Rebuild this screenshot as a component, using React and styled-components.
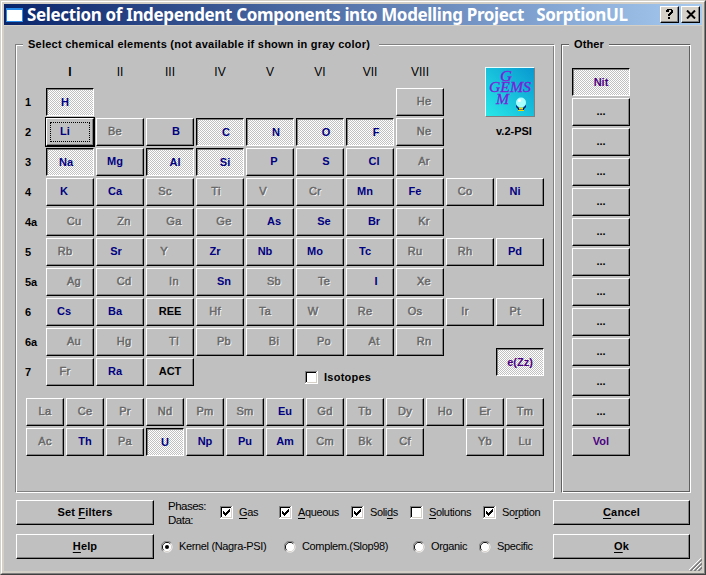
import React from "react";
import styled, { createGlobalStyle, css } from "styled-components";

const GlobalStyle = createGlobalStyle`
  * { box-sizing: border-box; }
  body { margin: 0; overflow: hidden; font: 11px/13px "Liberation Sans", Arial, sans-serif; color: #000; }
  button { font: inherit; color: inherit; padding: 0; margin: 0; border: 0; border-radius: 0; }
  u { text-decoration: underline; text-underline-offset: 2px; text-decoration-thickness: 1px; text-decoration-skip-ink: none; }
`;

const raised = css`
  border: 1px solid;
  border-color: #fff #000 #000 #fff;
  box-shadow: inset -1px -1px #808080;
`;

const sunken = css`
  border: 1px solid;
  border-color: #000 #fff #fff #000;
  box-shadow: inset 1px 1px #808080;
  background: conic-gradient(#fff 25%, #c0c0c0 0 50%, #fff 0 75%, #c0c0c0 0) 0 0 / 2px 2px;
`;

const Window = styled.div`
  width: 706px;
  height: 575px;
  border: 1px solid;
  border-color: #d4d0c8 #404040 #404040 #d4d0c8;
  background: #d4d0c8;
`;

const Frame = styled.div`
  height: 573px;
  border: 1px solid;
  border-color: #fff #808080 #808080 #fff;
  padding: 2px;
  display: flex;
  flex-direction: column;
`;

const TitleBar = styled.header`
  height: 21px;
  margin-bottom: 1px;
  padding: 0 2px;
  display: flex;
  align-items: center;
  background: linear-gradient(90deg, #0a246a, #a6caf0);
`;

const AppIcon = styled.span`
  width: 17px;
  height: 14px;
  background: #fff;
  border: 1px solid #2a8ae8;
  border-top-width: 2px;
`;

const Title = styled.h1`
  margin: 0 0 0 4px;
  flex: 1;
  white-space: pre;
  color: #fff;
  font: bold 17px/21px "Noto Sans", sans-serif;
  letter-spacing: ${(p) => p.$spacing}px;
`;

const CaptionButton = styled.button`
  width: 19px;
  height: 17px;
  margin-left: ${(p) => p.$gap || 0}px;
  display: grid;
  place-items: center;
  background: #d4d0c8;
  ${raised}
`;

const Body = styled.main`
  flex: 1;
  background: #c0c0c0;
  padding: 18px 11px 0;
`;

const Panels = styled.div`
  display: flex;
  gap: 6px;
`;

const Group = styled.section`
  position: relative;
  width: ${(p) => p.$width}px;
  height: 449px;
  border: 1px solid;
  border-color: ${(p) => p.$line} #fff #fff ${(p) => p.$line};
  box-shadow: inset 1px 1px #fff, inset -1px -1px ${(p) => p.$line};
  padding: ${(p) => p.$pad};
`;

const Legend = styled.h2`
  position: absolute;
  left: 7px;
  top: -8px;
  width: ${(p) => p.$width}px;
  margin: 0;
  padding-left: 5px;
  background: #c0c0c0;
  font: bold 11px/14px "Liberation Sans", Arial, sans-serif;
  letter-spacing: ${(p) => p.$spacing}px;
  white-space: nowrap;
`;

const inks = { on: "#000080", off: "#686868", black: "#000", violet: "#4b0082" };

const Key = styled.button`
  width: ${(p) => p.$width}px;
  height: 28px;
  display: flex;
  align-items: center;
  justify-content: center;
  background: #c0c0c0;
  font-weight: bold;
  color: ${(p) => inks[p.$ink]};
  ${(p) => (p.$pressed ? sunken : raised)}
  ${(p) => p.$ink === "off" && css`
    font-weight: normal;
    letter-spacing: 0.3px;
    -webkit-text-stroke: 0.5px #686868;
    text-shadow: 1px 1px #fff;
  `}
  ${(p) => p.$focused && css`
    box-shadow: inset -1px -1px #808080, 0 0 0 1px #000;
  `}
`;

const KeyText = styled.span`
  flex: 1;
  text-align: center;
  padding-left: ${(p) => Math.max(0, p.$shift) * 2}px;
  padding-right: ${(p) => Math.max(0, -p.$shift) * 2}px;
  margin-top: ${(p) => (p.$pressed ? 1 : -1)}px;
  white-space: nowrap;
`;

const FocusRing = styled.span`
  flex: 1;
  margin: 0 3px;
  height: 20px;
  display: flex;
  align-items: center;
  border: 1px dotted #000;
`;

const TableHead = styled.div`
  display: grid;
  grid-template-columns: repeat(8, 50px);
  margin-left: 20px;
  height: 22px;
  text-align: center;
  font-size: 12px;
`;

const Numeral = styled.span`
  width: 48px;
  font-weight: ${(p) => (p.$bold ? "bold" : "normal")};
`;

const Period = styled.div`
  height: 30px;
  display: grid;
  grid-template-columns: 18px repeat(10, 48px);
  column-gap: 2px;
`;

const PeriodLabel = styled.span`
  font-weight: bold;
  line-height: 28px;
  margin-left: -1px;
`;

const BottomRows = styled.div`
  display: grid;
  grid-template-columns: repeat(13, 38px);
  gap: 2px;
  margin-top: 10px;
`;

const Slot = styled.span``;

const Logo = styled.div`
  position: absolute;
  left: 469px;
  top: 22px;
  width: 58px;
  text-align: center;
  font-weight: bold;
`;

const Emblem = styled.div`
  width: 50px;
  height: 50px;
  margin-bottom: 8px;
  border: 1px solid;
  border-color: #e8ffff #808080 #808080 #e8ffff;
`;

const FloatKey = styled.div`
  grid-column: 11;
  margin-top: -10px;
`;

const IsotopeSlot = styled.div`
  grid-column: 7 / 10;
  margin: 13px 0 0 9px;
  font-weight: bold;
  letter-spacing: 0.25px;
`;

const OtherList = styled.div`
  display: flex;
  flex-direction: column;
  gap: 2px;
`;

const Footer = styled.footer`
  margin: 7px 1px 0;
  display: grid;
  grid-template-columns: 138px 399px 137px;
  grid-template-rows: 25px 25px;
  row-gap: 9px;
`;

const Command = styled.button`
  background: #c0c0c0;
  font-weight: bold;
  letter-spacing: 0.15px;
  padding-bottom: 1px;
  ${raised}
`;

const Options = styled.div`
  display: flex;
  align-items: center;
  padding-left: ${(p) => p.$inset}px;
  letter-spacing: -0.35px;
`;

const Captions = styled.div`
  width: 52px;
  line-height: 14px;
  font-size: 11.5px;
  letter-spacing: -0.5px;
`;

const Option = styled.label`
  width: ${(p) => p.$width}px;
  display: flex;
  align-items: center;
  gap: 6px;
  white-space: nowrap;
`;

const Grip = styled.svg`
  position: absolute;
  left: 689px;
  top: 558px;
`;

const Mark = ({ checked }) => (
  <svg width="13" height="13" shapeRendering="crispEdges">
    <path d="M0 0h13v13h-13z" fill="#fff" />
    <path d="M0 0h12v1h-11v11h-1z" fill="#808080" />
    <path d="M1 1h10v1h-9v9h-1z" fill="#000" />
    <path d="M2 11h9v-9h1v10h-10z" fill="#d4d0c8" />
    {checked && <path d="M3 5h1v1h1v1h1v-1h1v-1h1v-1h1v-1h1v3h-1v1h-1v1h-1v1h-1v1h-1v-1h-1v-1h-1z" fill="#000" />}
  </svg>
);

const Radio = ({ checked }) => (
  <svg width="12" height="12">
    <circle cx="6" cy="6" r="5.5" fill="#fff" />
    <path d="M1.8 10.2A5.5 5.5 0 0 1 10.2 1.8" fill="none" stroke="#808080" />
    <path d="M2.7 9.3A4.6 4.6 0 0 1 9.3 2.7" fill="none" stroke="#000" />
    <path d="M9.3 2.7A4.6 4.6 0 0 1 2.7 9.3" fill="none" stroke="#d4d0c8" />
    {checked && <circle cx="6" cy="6" r="2" fill="#000" />}
  </svg>
);

const Element = ({ spec, width = 48 }) => {
  const [name, ink = "off", shift = 0, state] = spec;
  const pressed = state === "pressed";
  const label = <KeyText $shift={shift} $pressed={pressed}>{name}</KeyText>;
  return (
    <Key $width={width} $ink={ink} $pressed={pressed} $focused={state === "focused"}>
      {state === "focused" ? <FocusRing>{label}</FocusRing> : label}
    </Key>
  );
};

const P = "pressed";
const periods = [
  ["1", [["H", "on", -5, P], null, null, null, null, null, null, ["He", "off", 4]]],
  ["2", [["Li", "on", -5, "focused"], ["Be", "off", -5], ["B", "on", 6], ["C", "on", 6, P], ["N", "on", 6, P], ["O", "on", 6, P], ["F", "on", 6, P], ["Ne", "off", 4]]],
  ["3", [["Na", "on", -4, P], ["Mg", "on", -5], ["Al", "on", 5, P], ["Si", "on", 5, P], ["P", "on", 4], ["S", "on", 6], ["Cl", "on", 4], ["Ar", "off", 4]]],
  ["4", [["K", "on", -6], ["Ca", "on", -5], ["Sc", "off", -5], ["Ti", "off", -4], ["V", "off", -7], ["Cr", "off", -5], ["Mn", "on", -5], ["Fe", "on", -5], ["Co", "off", -5], ["Ni", "on", -5]]],
  ["4a", [["Cu", "off", 4], ["Zn", "off", 4], ["Ga", "off", 4], ["Ge", "off", 4], ["As", "on", 4], ["Se", "on", 4], ["Br", "on", 4], ["Kr", "off", 4]]],
  ["5", [["Rb", "off", -5], ["Sr", "on", -4], ["Y", "off", -6], ["Zr", "on", -5], ["Nb", "on", -5], ["Mo", "on", -5], ["Tc", "on", -5], ["Ru", "off", -5], ["Rh", "off", -5], ["Pd", "on", -5]]],
  ["5a", [["Ag", "off", 4], ["Cd", "off", 4], ["In", "off", 4], ["Sn", "on", 4], ["Sb", "off", 4], ["Te", "off", 4], ["I", "on", 6], ["Xe", "off", 4]]],
  ["6", [["Cs", "on", -6], ["Ba", "on", -5], ["REE", "black", 0], ["Hf", "off", -5], ["Ta", "off", -5], ["W", "off", -7], ["Re", "off", -5], ["Os", "off", -5], ["Ir", "off", -5], ["Pt", "off", -5]]],
  ["6a", [["Au", "off", 4], ["Hg", "off", 4], ["Tl", "off", 4], ["Pb", "off", 4], ["Bi", "off", 4], ["Po", "off", 4], ["At", "off", 4], ["Rn", "off", 4]]],
  ["7", [["Fr", "off", -5], ["Ra", "on", -5], ["ACT", "black", 0]]],
];

const series = [
  "La", "Ce", "Pr", "Nd", "Pm", "Sm", "*Eu", "Gd", "Tb", "Dy", "Ho", "Er", "Tm",
  "Ac", "*Th", "Pa", "!U", "*Np", "*Pu", "*Am", "Cm", "Bk", "Cf", "", "Yb", "Lu",
];

const seriesSpec = (s) =>
  s[0] === "*" ? [s.slice(1), "on"] : s[0] === "!" ? [s.slice(1), "on", 0, P] : [s, "off"];

const others = [["Nit", "violet", 0, P], ...Array(11).fill(["...", "black"]), ["Vol", "violet"]];

export default function App() {
  return (
    <Window>
      <GlobalStyle />
      <Frame>
        <TitleBar>
          <AppIcon />
          <Title $spacing={-0.35}>Selection of Independent Components into Modelling Project   SorptionUL</Title>
          <CaptionButton>
            <svg width="9" height="11" shapeRendering="crispEdges"><path d="M1 1h1v-1h5v1h1v3h-1v1h-1v1h-1v1h-2v-2h1v-1h1v-1h1v-2h-2v2h-3zM3 8h2v2h-2z" /></svg>
          </CaptionButton>
          <CaptionButton $gap={2}>
            <svg width="10" height="9"><path d="M1 0.5L9 8.5M9 0.5L1 8.5" stroke="#000" strokeWidth="2" /></svg>
          </CaptionButton>
        </TitleBar>
        <Body>
          <Panels>
            <Group $width={540} $line="#808080" $pad="21px 0 0 10px">
              <Legend $width={356} $spacing={0.24}>Select chemical elements (not available if shown in gray color)</Legend>
              <TableHead>
                {["I", "II", "III", "IV", "V", "VI", "VII", "VIII"].map((n, i) => (
                  <Numeral key={n} $bold={i === 0}>{n}</Numeral>
                ))}
              </TableHead>
              <div>
                {periods.map(([label, cells]) => (
                  <Period key={label}>
                    <PeriodLabel>{label}</PeriodLabel>
                    {cells.map((c, i) => (c ? <Element key={i} spec={c} /> : <Slot key={i} />))}
                    {label === "7" && (
                      <>
                        <IsotopeSlot><Option><Mark />Isotopes</Option></IsotopeSlot>
                        <FloatKey><Element spec={["e(Zz)", "violet", 0, P]} /></FloatKey>
                      </>
                    )}
                  </Period>
                ))}
              </div>
              <BottomRows>
                {series.map((s, i) => (s ? <Element key={i} spec={seriesSpec(s)} width={38} /> : <Slot key={i} />))}
              </BottomRows>
              <Logo>
                <Emblem>
                  <svg width="48" height="48" viewBox="0 0 48 48" display="block">
                    <defs>
                      <linearGradient id="sea" x1="0" y1="1" x2="1" y2="0">
                        <stop offset="0" stopColor="#28e8e8" />
                        <stop offset="1" stopColor="#0898d0" />
                      </linearGradient>
                    </defs>
                    <rect width="48" height="48" fill="url(#sea)" />
                    <g fill="#7a1fd8" stroke="#7a1fd8" strokeWidth="0.3" fontFamily="Liberation Serif, serif" fontWeight="normal" fontStyle="italic" fontSize="15">
                      <text x="14" y="12.5" textLength="12" lengthAdjust="spacingAndGlyphs">G</text>
                      <text x="3" y="24" textLength="42" lengthAdjust="spacingAndGlyphs">GEMS</text>
                      <text x="10" y="36" textLength="13" lengthAdjust="spacingAndGlyphs">M</text>
                    </g>
                    <circle cx="35" cy="34.5" r="5" fill="#a8ffff" />
                    <circle cx="33.5" cy="32.5" r="1.5" fill="#fff" />
                    <path d="M30 37l3 3h4l3-3v2l-2 2v2h-6v-2l-2-2z" fill="#001888" />
                    <path d="M33 39.5h4v2h-4zM32 42h6v1h-6z" fill="#f0d800" />
                  </svg>
                </Emblem>
                v.2-PSI
              </Logo>
            </Group>
            <Group $width={130} $line="#606060" $pad="23px 0 0 10px">
              <Legend $width={40} $spacing={0.1}>Other</Legend>
              <OtherList>
                {others.map((o, i) => <Element key={i} spec={o} width={58} />)}
              </OtherList>
            </Group>
          </Panels>
          <Footer>
            <Command>Set <u>F</u>ilters</Command>
            <Options $inset={14}>
              <Captions>Phases:<br />Data:</Captions>
              <Option $width={59}><Mark checked /><span><u>G</u>as</span></Option>
              <Option $width={72}><Mark checked /><span><u>A</u>queous</span></Option>
              <Option $width={59}><Mark checked /><span>Soli<u>d</u>s</span></Option>
              <Option $width={73}><Mark /><span><u>S</u>olutions</span></Option>
              <Option $width={70}><Mark checked /><span>So<u>r</u>ption</span></Option>
            </Options>
            <Command><u>C</u>ancel</Command>
            <Command><u>H</u>elp</Command>
            <Options $inset={7}>
              <Option $width={123}><Radio checked />Kernel (Nagra-PSI)</Option>
              <Option $width={129}><Radio />Complem.(Slop98)</Option>
              <Option $width={66}><Radio />Organic</Option>
              <Option $width={70}><Radio />Specific</Option>
            </Options>
            <Command><u>O</u>k</Command>
          </Footer>
          <Grip width="13" height="13">
            <path d="M0 12L12 0M4 12L12 4M8 12L12 8" stroke="#fff" />
            <path d="M1 13L13 1M2 13L13 2M5 13L13 5M6 13L13 6M9 13L13 9M10 13L13 10" stroke="#808080" />
          </Grip>
        </Body>
      </Frame>
    </Window>
  );
}
